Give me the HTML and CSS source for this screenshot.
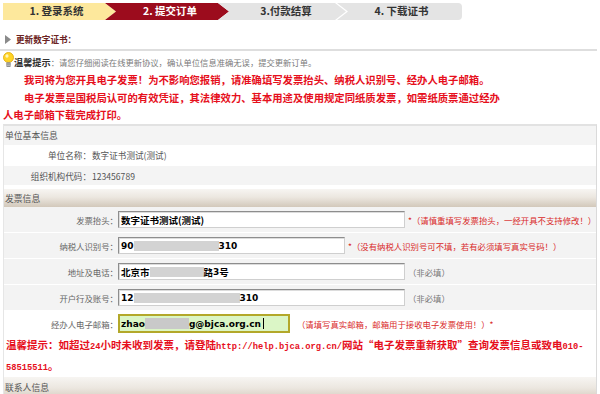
FILE: index.html
```html
<!DOCTYPE html>
<html lang="zh-CN">
<head>
<meta charset="utf-8">
<title>更新数字证书</title>
<link rel="stylesheet" href="styles.css">
</head>
<body>
<div class="steps">
  <div class="step s1">1. 登录系统</div>
  <div class="step s2">2. 提交订单</div>
  <div class="step s3">3.付款结算</div>
  <div class="step s4">4. 下载证书</div>
</div>

<div class="title">
  <svg class="tri" width="6" height="9" viewBox="0 0 6 9"><polygon points="0,0 6,4.5 0,9" fill="#8a8a8a"/></svg>
  <span>更新数字证书：</span>
</div>

<div class="tip">
  <svg class="bulb" width="11" height="16" viewBox="0 0 11 16">
    <circle cx="5.5" cy="5.5" r="5" fill="#ffd426" stroke="#e0a800" stroke-width="0.8"/>
    <ellipse cx="4" cy="4" rx="1.6" ry="1.8" fill="#fff6b8"/>
    <rect x="3.2" y="10.3" width="4.6" height="4.6" rx="0.8" fill="#8f8f8f"/>
    <line x1="3.2" y1="12" x2="7.8" y2="12" stroke="#cfcfcf" stroke-width="0.6"/>
    <line x1="3.2" y1="13.5" x2="7.8" y2="13.5" stroke="#cfcfcf" stroke-width="0.6"/>
  </svg>
  <b>温馨提示</b><span>：请您仔细阅读在线更新协议，确认单位信息准确无误，提交更新订单。</span>
</div>
<p class="red">我司将为您开具电子发票！为不影响您报销，请准确填写发票抬头、纳税人识别号、经办人电子邮箱。</p>
<p class="red">电子发票是国税局认可的有效凭证，其法律效力、基本用途及使用规定同纸质发票，如需纸质票通过经办人电子邮箱下载完成打印。</p>

<div class="panel">
  <div class="phead plain">单位基本信息</div>
  <div class="irow">
    <span class="lab">单位名称：</span><span class="val">数字证书测试(测试)</span>
  </div>
  <div class="irow alt">
    <span class="lab">组织机构代码：</span><span class="val">123456789</span>
  </div>

  <div class="phead grad">发票信息</div>
  <div class="frow">
    <span class="flab">发票抬头：</span>
    <div class="field">
      <div class="inp w287"><span class="cjk">数字证书测试(测试)</span></div>
      <span class="hint">*（请慎重填写发票抬头，一经开具不支持修改！）</span>
    </div>
  </div>
  <div class="frow">
    <span class="flab">纳税人识别号：</span>
    <div class="field">
      <div class="inp w227"><span class="lat">90</span><span class="blur b85"></span><span class="lat">310</span></div>
      <span class="hint">*（没有纳税人识别号可不填，若有必须填写真实号码！）</span>
    </div>
  </div>
  <div class="frow">
    <span class="flab">地址及电话：</span>
    <div class="field">
      <div class="inp w287"><span class="cjk">北京市</span><span class="blur b54"></span><span class="cjk">路</span><span class="lat">3</span><span class="cjk">号</span></div>
      <span class="hint gray">（非必填）</span>
    </div>
  </div>
  <div class="frow">
    <span class="flab">开户行及账号：</span>
    <div class="field">
      <div class="inp w287"><span class="lat">12</span><span class="blur b106"></span><span class="lat">310</span></div>
      <span class="hint gray">（非必填）</span>
    </div>
  </div>
  <div class="frow mail">
    <span class="flab">经办人电子邮箱：</span>
    <div class="field">
      <div class="inp w172 focus"><span class="lat">zhao</span><span class="blur b44"></span><span class="lat">g@bjca.org.cn</span><span class="caret"></span></div>
      <span class="hint">（请填写真实邮箱，邮箱用于接收电子发票使用！）*</span>
    </div>
  </div>
  <p class="notice">温馨提示：如超过<span class="mono">24</span>小时未收到发票，请登陆<span class="mono">http://help.bjca.org.cn/</span>网站“电子发票重新获取”查询发票信息或致电<span class="mono">010-58515511</span>。</p>

  <div class="phead grad last">联系人信息</div>
</div>
</body>
</html>
```

FILE: styles.css
```css
* { box-sizing: border-box; }

body {
  margin: 0;
  width: 600px;
  height: 394px;
  overflow: hidden;
  background: #fff;
  font-family: "Noto Sans CJK SC", "Noto Sans", sans-serif;
  color: #333;
}

/* step bar */
.steps {
  display: flex;
  margin: 3px 0 0 3px;
  height: 17px;
}
.step {
  height: 17px;
  display: flex;
  align-items: center;
  justify-content: center;
  font-size: 10.5px;
  font-weight: bold;
  color: #333;
  line-height: 1;
}
.s1 {
  width: 113px;
  background: #fde89c;
  clip-path: polygon(0 0, calc(100% - 11px) 0, 100% 50%, calc(100% - 11px) 100%, 0 100%);
  padding-right: 6px;
}
.s2 {
  width: 124px;
  margin-left: -11px;
  background: #9c0c1d;
  color: #fff;
  clip-path: polygon(0 0, calc(100% - 11px) 0, 100% 50%, calc(100% - 11px) 100%, 0 100%, 11px 50%);
  padding-left: 6px;
}
.s3 {
  width: 128px;
  margin-left: -11px;
  background: #e4e4e4;
  clip-path: polygon(0 0, calc(100% - 11px) 0, 100% 50%, calc(100% - 11px) 100%, 0 100%, 11px 50%);
  padding-left: 8px;
}
.s4 {
  width: 125px;
  margin-left: -9px;
  background: #e4e4e4;
  border-radius: 0 4px 4px 0;
  clip-path: polygon(0 0, 100% 0, 100% 100%, 0 100%, 11px 50%);
  padding-left: 4px;
}

/* title */
.title {
  margin-top: 9px;
  width: 597px;
  height: 22px;
  border-bottom: 2px solid #dedede;
  display: flex;
  align-items: center;
  padding-left: 5px;
  font-size: 8.6px;
  font-weight: bold;
  color: #6b2323;
}
.tri { margin-right: 5px; }

/* tip */
.tip {
  margin: 2px 0 0 3px;
  height: 18px;
  display: flex;
  align-items: center;
  font-size: 8.3px;
  color: #7a7a7a;
}
.tip b {
  font-size: 9.2px;
  color: #333;
}
.bulb { margin: -4px 0 0 0; }

.red {
  margin: 0;
  width: 508px;
  padding-left: 3px;
  text-indent: 21px;
  font-size: 10.35px;
  line-height: 17.7px;
  font-weight: bold;
  color: #e60f1c;
}

/* panel */
.panel {
  width: 594px;
  margin-left: 3px;
  border-top: 2px solid #e2e2e2;
  border-left: 1px solid #e6e6e6;
  border-right: 1px solid #dadada;
}
.phead {
  display: flex;
  align-items: center;
  padding-left: 1px;
  font-size: 8.8px;
  color: #555;
}
.phead.plain {
  height: 19px;
  background: #f4f4f4;
}
.phead.grad {
  height: 18px;
  margin-top: 3px;
  background: linear-gradient(to bottom, #f7f5f2 0%, #ece7e0 45%, #d2c8ba 100%);
}
.phead.last {
  margin-top: 0;
  height: 24px;
  padding-bottom: 4px;
}

.irow {
  height: 21px;
  display: grid;
  grid-template-columns: 87px 1fr;
  align-items: center;
  font-size: 8.6px;
  color: #555;
  border-bottom: 1px solid #fff;
}
.irow.alt { background: #f4f4f4; height: 20px; }
.lab { text-align: right; }
.val { padding-left: 1px; }

.frow {
  height: 26px;
  display: grid;
  grid-template-columns: 114px 1fr;
  align-items: center;
  background: #f3f3f3;
  border-bottom: 1px solid #fff;
}
.frow.mail {
  height: 25px;
  background: #fff;
  border-bottom: 0;
}
.flab {
  text-align: right;
  font-size: 8.4px;
  color: #666;
}
.field {
  display: flex;
  align-items: center;
}
.inp {
  height: 17px;
  display: flex;
  align-items: center;
  padding-left: 2px;
  background: #fff;
  border: 1px solid;
  border-color: #8d8d8d #cfcfcf #cfcfcf #8d8d8d;
  box-shadow: inset 1px 1px 0 #dcdcdc;
  color: #000;
  font-weight: bold;
  overflow: hidden;
  white-space: nowrap;
}
.inp.focus {
  height: 19px;
  border: 2px solid #b3a82a;
  background: #dbf6c6;
  box-shadow: none;
  padding-left: 1px;
}
.w287 { width: 287px; }
.w227 { width: 227px; }
.w172 { width: 172px; }
.cjk { font-size: 9.5px; }
.lat { font-family: "DejaVu Sans", sans-serif; font-size: 9px; }
.blur {
  display: inline-block;
  height: 10px;
  background: #d3d3d3;
}
.b85 { width: 85px; }
.b54 { width: 54px; }
.b106 { width: 106px; }
.b44 { width: 44px; height: 11px; background: #c9c9c9; }
.caret {
  display: inline-block;
  width: 1px;
  height: 11px;
  margin-left: 2px;
  background: #000;
}
.hint {
  margin-left: 3px;
  font-size: 8.4px;
  color: #d92a2a;
  white-space: nowrap;
}
.hint.gray { color: #777; }
.mail .hint { margin-left: 7px; }

.notice {
  margin: 0;
  padding-left: 2px;
  font-size: 10.5px;
  line-height: 17.5px;
  font-weight: bold;
  color: #e60f1c;
}
.mono {
  font-family: "Liberation Mono", monospace;
  font-size: 8.75px;
}
```
